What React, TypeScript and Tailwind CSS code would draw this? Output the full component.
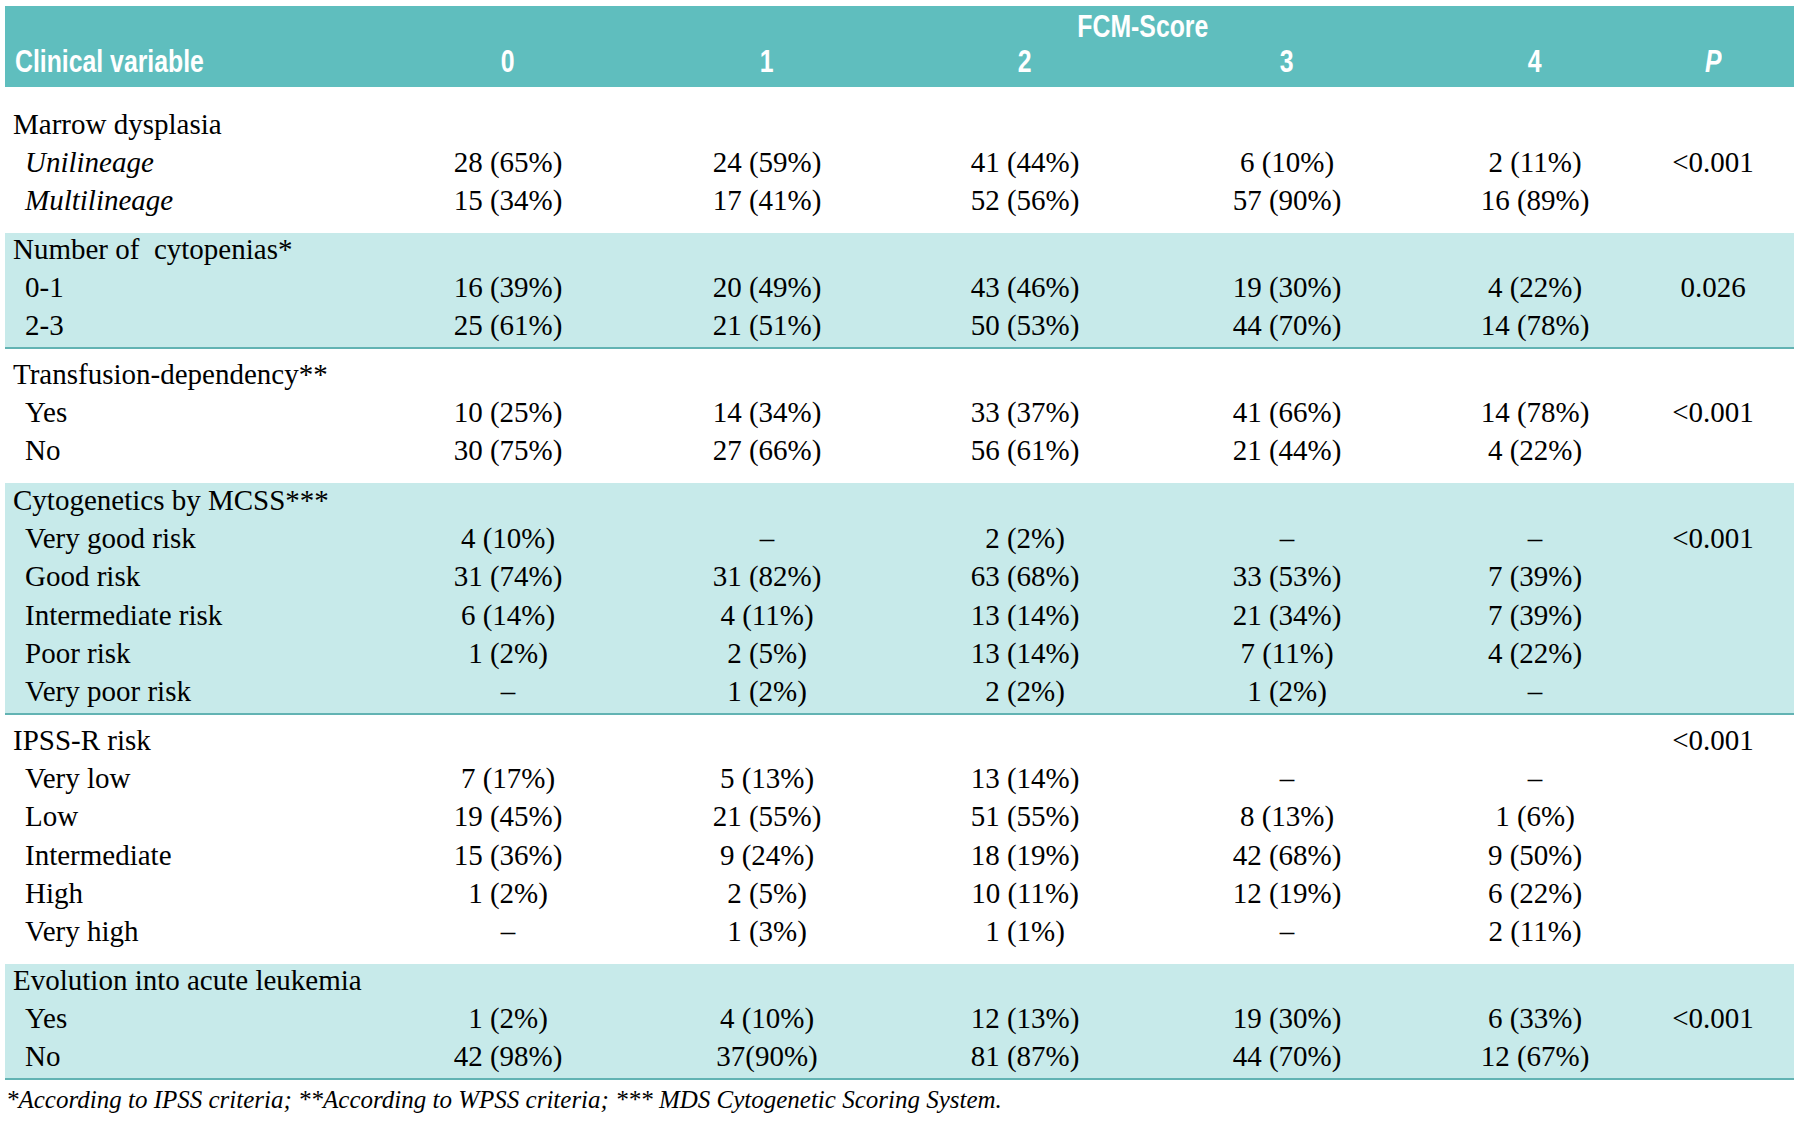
import React from 'react';

type Row = {
  label: string;
  values?: string[];
  p?: string;
  group?: boolean;
  italic?: boolean;
};

type Block = {
  band: boolean;
  rows: Row[];
  box: string;
  inner: string;
};

const cols = 'grid grid-cols-[374px_258px_260px_256px_268px_228px_128px_1fr]';

const blocks: Block[] = [
  {
    band: false,
    box: 'h-[146px] pt-[18px]',
    inner: '',
    rows: [
      { label: 'Marrow dysplasia', group: true },
      { label: 'Unilineage', italic: true, values: ['28 (65%)', '24 (59%)', '41 (44%)', '6 (10%)', '2 (11%)'], p: '<0.001' },
      { label: 'Multilineage', italic: true, values: ['15 (34%)', '17 (41%)', '52 (56%)', '57 (90%)', '16 (89%)'] },
    ],
  },
  {
    band: true,
    box: 'h-[116px]',
    inner: '-mt-[3px]',
    rows: [
      { label: 'Number of  cytopenias*', group: true },
      { label: '0-1', values: ['16 (39%)', '20 (49%)', '43 (46%)', '19 (30%)', '4 (22%)'], p: '0.026' },
      { label: '2-3', values: ['25 (61%)', '21 (51%)', '50 (53%)', '44 (70%)', '14 (78%)'] },
    ],
  },
  {
    band: false,
    box: 'h-[134px] pt-[6px]',
    inner: '',
    rows: [
      { label: 'Transfusion-dependency**', group: true },
      { label: 'Yes', values: ['10 (25%)', '14 (34%)', '33 (37%)', '41 (66%)', '14 (78%)'], p: '<0.001' },
      { label: 'No', values: ['30 (75%)', '27 (66%)', '56 (61%)', '21 (44%)', '4 (22%)'] },
    ],
  },
  {
    band: true,
    box: 'h-[232px]',
    inner: '-mt-[2px]',
    rows: [
      { label: 'Cytogenetics by MCSS***', group: true },
      { label: 'Very good risk', values: ['4 (10%)', '–', '2 (2%)', '–', '–'], p: '<0.001' },
      { label: 'Good risk', values: ['31 (74%)', '31 (82%)', '63 (68%)', '33 (53%)', '7 (39%)'] },
      { label: 'Intermediate risk', values: ['6 (14%)', '4 (11%)', '13 (14%)', '21 (34%)', '7 (39%)'] },
      { label: 'Poor risk', values: ['1 (2%)', '2 (5%)', '13 (14%)', '7 (11%)', '4 (22%)'] },
      { label: 'Very poor risk', values: ['–', '1 (2%)', '2 (2%)', '1 (2%)', '–'] },
    ],
  },
  {
    band: false,
    box: 'h-[249px] pt-[6px]',
    inner: '',
    rows: [
      { label: 'IPSS-R risk', group: true, p: '<0.001' },
      { label: 'Very low', values: ['7 (17%)', '5 (13%)', '13 (14%)', '–', '–'] },
      { label: 'Low', values: ['19 (45%)', '21 (55%)', '51 (55%)', '8 (13%)', '1 (6%)'] },
      { label: 'Intermediate', values: ['15 (36%)', '9 (24%)', '18 (19%)', '42 (68%)', '9 (50%)'] },
      { label: 'High', values: ['1 (2%)', '2 (5%)', '10 (11%)', '12 (19%)', '6 (22%)'] },
      { label: 'Very high', values: ['–', '1 (3%)', '1 (1%)', '–', '2 (11%)'] },
    ],
  },
  {
    band: true,
    box: 'h-[116px]',
    inner: '-mt-[3px]',
    rows: [
      { label: 'Evolution into acute leukemia', group: true },
      { label: 'Yes', values: ['1 (2%)', '4 (10%)', '12 (13%)', '19 (30%)', '6 (33%)'], p: '<0.001' },
      { label: 'No', values: ['42 (98%)', '37(90%)', '81 (87%)', '44 (70%)', '12 (67%)'] },
    ],
  },
];

const TableRow = ({ row }: { row: Row }) => (
  <div className={`${cols} h-[38.2px] leading-[38.2px] items-center`}>
    <div
      className={`whitespace-pre ${row.group ? 'pl-[8px]' : 'pl-[20px]'} ${row.italic ? 'italic' : ''}`}
    >
      {row.label}
    </div>
    {[0, 1, 2, 3, 4].map((i) => (
      <div key={i} className="text-center">
        {row.values ? row.values[i] : ''}
      </div>
    ))}
    <div className="text-center">{row.p ?? ''}</div>
    <div />
  </div>
);

export default function App() {
  return (
    <div className="min-h-screen bg-white pt-[6px] pl-[5px] text-black [font-family:'Liberation_Serif',serif]">
      <div className="w-[1789px]">
        {/* Header */}
        <div className="bg-[#5fbebe] pt-[3px] pb-[8px] text-white font-bold text-[31px] [font-family:'Liberation_Sans',sans-serif]">
          <div className={`${cols} h-[35px] leading-[35px]`}>
            <div className="col-start-3 col-span-4 text-center">
              <span className="inline-block scale-x-[0.8] origin-center">FCM-Score</span>
            </div>
          </div>
          <div className={`${cols} h-[35px] leading-[35px]`}>
            <div className="pl-[10px]">
              <span className="inline-block scale-x-[0.8] origin-left whitespace-nowrap">Clinical variable</span>
            </div>
            {['0', '1', '2', '3', '4'].map((h) => (
              <div key={h} className="text-center">
                <span className="inline-block scale-x-[0.8] origin-center">{h}</span>
              </div>
            ))}
            <div className="text-center">
              <span className="inline-block scale-x-[0.8] origin-center italic">P</span>
            </div>
            <div />
          </div>
        </div>

        {/* Body */}
        <div className="text-[29px]">
          {blocks.map((b, bi) => (
            <div
              key={bi}
              className={`flex flex-col ${b.box} ${b.band ? 'bg-[#c7eaea] border-b-2 border-[#62b3b3]' : 'bg-white'}`}
            >
              <div className={b.inner}>
                {b.rows.map((r, ri) => (
                  <TableRow key={ri} row={r} />
                ))}
              </div>
            </div>
          ))}
        </div>

        {/* Footnote */}
        <div className="pt-[6px] pl-[1px] leading-[28px] text-[25px] italic whitespace-pre">
          *According to IPSS criteria; **According to WPSS criteria; *** MDS Cytogenetic Scoring System.
        </div>
      </div>
    </div>
  );
}
